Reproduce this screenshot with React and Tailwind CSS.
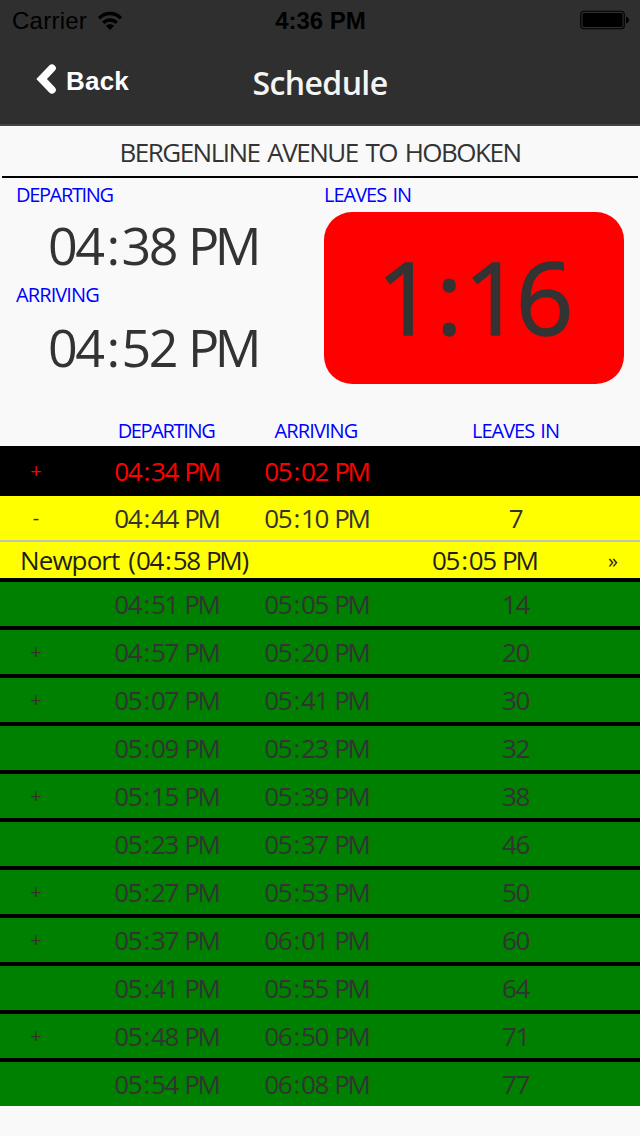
const trains = [
    { sign: "", departing: "04:51 PM", arriving: "05:05 PM", leaves: "14" },
    { sign: "+", departing: "04:57 PM", arriving: "05:20 PM", leaves: "20" },
    { sign: "+", departing: "05:07 PM", arriving: "05:41 PM", leaves: "30" },
    { sign: "", departing: "05:09 PM", arriving: "05:23 PM", leaves: "32" },
    { sign: "+", departing: "05:15 PM", arriving: "05:39 PM", leaves: "38" },
    { sign: "", departing: "05:23 PM", arriving: "05:37 PM", leaves: "46" },
    { sign: "+", departing: "05:27 PM", arriving: "05:53 PM", leaves: "50" },
    { sign: "+", departing: "05:37 PM", arriving: "06:01 PM", leaves: "60" },
    { sign: "", departing: "05:41 PM", arriving: "05:55 PM", leaves: "64" },
    { sign: "+", departing: "05:48 PM", arriving: "06:50 PM", leaves: "71" },
    { sign: "", departing: "05:54 PM", arriving: "06:08 PM", leaves: "77" },
];

// Digits are set tight, the colon gets some room around it
const Time = ({ value }) => {
    const [clock, period] = value.split(" ");
    const [hours, minutes] = clock.split(":");
    return (
        <span className="whitespace-nowrap tracking-[-0.048em]">
            {hours}
            <span className="mx-[0.075em]">:</span>
            {minutes}{" "}
            <span className="ml-[0.02em] tracking-[-0.085em]">{period}</span>
        </span>
    );
};

const Row = ({ sign, departing, arriving, leaves, className }) => (
    <div className={`grid grid-cols-[92px_150px_150px_248px] items-center text-center text-[26px] leading-[42px] ${className}`}>
        <span className="w-[72px] text-[20px]">{sign}</span>
        <span className="pr-px"><Time value={departing} /></span>
        <span className="pr-px"><Time value={arriving} /></span>
        <span className="pr-px tracking-[-0.048em]">{leaves}</span>
    </div>
);

const StatusBar = () => (
    <div className="grid h-10 grid-cols-3 items-center pl-3 pr-[11px] font-['Liberation_Sans'] text-[24px] text-black">
        <div className="flex items-center gap-[10px] pt-0.5">
            <span className="tracking-[0.25px]">Carrier</span>
            <svg width="26" height="20" viewBox="0 0 26 20" fill="none" stroke="#000" strokeWidth="3.4">
                <path d="M2 7.2C8.5 1 17.5 1 24 7.2" />
                <path d="M6.2 11.7C10.2 8 15.8 8 19.8 11.7" />
                <path d="M13 19L8.8 14.8C11.2 12.7 14.8 12.7 17.2 14.8Z" fill="#000" stroke="none" />
            </svg>
        </div>
        <span className="whitespace-nowrap pt-0.5 text-center font-bold">4:36 PM</span>
        <svg className="justify-self-end" width="49" height="20" viewBox="0 0 49 20">
            <rect x="0.75" y="1.25" width="43.5" height="17.5" rx="3" fill="none" stroke="#000" strokeWidth="1.2" />
            <rect x="2.5" y="3" width="40" height="14" rx="1.5" fill="#000" />
            <path d="M46 6.7C50 7.5 50 12.5 46 13.5Z" fill="#000" />
        </svg>
    </div>
);

const App = () => {
    return (
        <div className="h-[1136px] w-[640px] overflow-hidden bg-[#f9f9f9] font-['Open_Sans','Noto_Sans',sans-serif] text-[#333333]">
            {/* Header */}
            <header className="h-[126px] border-b-2 border-[#444444] bg-[#2f2f2f]">
                <StatusBar />
                <div className="grid h-[84px] grid-cols-3 items-center text-white">
                    <div className="flex items-center gap-[10px] pb-[2px] pl-[36px] font-['Liberation_Sans'] text-[26px] font-bold">
                        <svg className="mb-1" width="20" height="30" viewBox="0 0 20 30" fill="none" stroke="#fff">
                            <path d="M16 4.2L5.6 15L16 25.8" strokeWidth="7.6" strokeLinecap="round" />
                        </svg>
                        <span className="tracking-[0.2px]">Back</span>
                    </div>
                    <h1 className="pt-px text-center text-[32px] font-semibold leading-10 tracking-[-0.6px] text-[#f4f4f4]">Schedule</h1>
                </div>
            </header>

            <h2 className="mx-0.5 h-[52px] border-b-2 border-black text-center text-[26px] leading-[53px] tracking-[-1.5px] [word-spacing:2.5px]">
                BERGENLINE AVENUE TO HOBOKEN
            </h2>

            {/* Next train */}
            <section className="flex h-[234px] pl-4">
                <div className="w-[308px]">
                    <div className="h-[34px] text-[20px] leading-[34px] tracking-[-1.35px] text-[#0000ff]">DEPARTING</div>
                    <div className="h-[66px] pl-8 text-[52px] leading-[66px]"><Time value="04:38 PM" /></div>
                    <div className="h-[34px] text-[20px] leading-[34px] tracking-[-0.9px] text-[#0000ff]">ARRIVING</div>
                    <div className="h-[66px] pl-8 text-[52px] leading-[69px]"><Time value="04:52 PM" /></div>
                </div>
                <div className="w-[300px]">
                    <div className="h-[34px] text-[20px] leading-[34px] tracking-[-1px] text-[#0000ff] [word-spacing:2px]">LEAVES IN</div>
                    <div className="h-[172px] rounded-[28px] bg-[#ff0000] pr-1 text-center text-[101px] font-medium leading-[168px] tracking-[-0.06em] [-webkit-text-stroke:1.5px_#333333]">
                        1<span className="mx-[0.075em]">:</span>16
                    </div>
                </div>
            </section>

            {/* Schedule */}
            <div className="grid h-[34px] grid-cols-[92px_150px_150px_248px] text-center text-[20px] leading-[38px] tracking-[-1.1px] text-[#0000ff]">
                <span />
                <span className="pr-0.5 tracking-[-1.35px]">DEPARTING</span>
                <span className="pr-0.5 tracking-[-0.9px]">ARRIVING</span>
                <span className="pr-px tracking-[-1px] [word-spacing:2px]">LEAVES IN</span>
            </div>
            <Row sign="+" departing="04:34 PM" arriving="05:02 PM" leaves="" className="h-[50px] bg-black text-[#ff0000]" />
            <Row sign="-" departing="04:44 PM" arriving="05:10 PM" leaves="7" className="h-[44px] bg-[#ffff00]" />
            <div className="flex h-[42px] items-center border-b-4 border-t-2 border-b-black border-t-[#c0c0c0] bg-[#ffff00] pl-5 text-[26px] leading-9 text-[#1f1f1f]">
                <span className="w-[412px]">
                    <span className="tracking-[-0.9px]">Newport</span> <span className="ml-0.5">(</span><Time value="04:58 PM" /><span className="ml-px">)</span>
                </span>
                <Time value="05:05 PM" />
                <span className="ml-auto pr-[22px] pt-0.5 text-[20px]">»</span>
            </div>
            <div className="grid gap-1 bg-black">
                {trains.map((train) => (
                    <Row key={train.departing} {...train} className="h-[44px] bg-[#008000]" />
                ))}
            </div>
        </div>
    );
};

export default App;
